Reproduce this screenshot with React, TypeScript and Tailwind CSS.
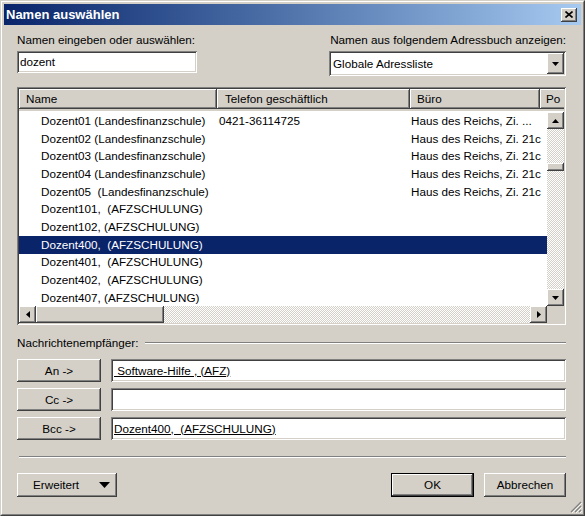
import React from "react";

const raised =
  "shadow-[inset_-1px_-1px_0_#404040,inset_1px_1px_0_#ffffff,inset_-2px_-2px_0_#808080,inset_2px_2px_0_#d4d0c8]";
const sunken =
  "shadow-[inset_1px_1px_0_#808080,inset_-1px_-1px_0_#ffffff,inset_2px_2px_0_#404040,inset_-2px_-2px_0_#d4d0c8]";
const dither =
  "bg-[image:repeating-conic-gradient(#d4d0c8_0_25%,#ffffff_0_50%)] bg-[length:2px_2px]";

type Dir = "up" | "down" | "left" | "right";

const Arrow = ({ dir }: { dir: Dir }) => {
  if (dir === "up")
    return (
      <svg width="7" height="4" viewBox="0 0 7 4">
        <polygon points="0,4 7,4 3.5,0" fill="#000" />
      </svg>
    );
  if (dir === "down")
    return (
      <svg width="7" height="4" viewBox="0 0 7 4">
        <polygon points="0,0 7,0 3.5,4" fill="#000" />
      </svg>
    );
  if (dir === "left")
    return (
      <svg width="4" height="7" viewBox="0 0 4 7">
        <polygon points="4,0 4,7 0,3.5" fill="#000" />
      </svg>
    );
  return (
    <svg width="4" height="7" viewBox="0 0 4 7">
      <polygon points="0,0 0,7 4,3.5" fill="#000" />
    </svg>
  );
};

const ScrollBtn = ({ dir }: { dir: Dir }) => (
  <div
    className={`w-[17px] h-[17px] shrink-0 bg-[#d4d0c8] ${raised} flex items-center justify-center`}
  >
    <Arrow dir={dir} />
  </div>
);

const rows = [
  ["Dozent01 (Landesfinanzschule)", "0421-36114725", "Haus des Reichs, Zi. ..."],
  ["Dozent02 (Landesfinanzschule)", "", "Haus des Reichs, Zi. 21c"],
  ["Dozent03 (Landesfinanzschule)", "", "Haus des Reichs, Zi. 21c"],
  ["Dozent04 (Landesfinanzschule)", "", "Haus des Reichs, Zi. 21c"],
  ["Dozent05  (Landesfinanzschule)", "", "Haus des Reichs, Zi. 21c"],
  ["Dozent101,  (AFZSCHULUNG)", "", ""],
  ["Dozent102, (AFZSCHULUNG)", "", ""],
  ["Dozent400,  (AFZSCHULUNG)", "", ""],
  ["Dozent401,  (AFZSCHULUNG)", "", ""],
  ["Dozent402,  (AFZSCHULUNG)", "", ""],
  ["Dozent407, (AFZSCHULUNG)", "", ""],
];

const selected = 7;

const RecipientRow = ({ label, value }: { label: string; value: string }) => (
  <div className="flex h-[23px] gap-[10px]">
    <div
      className={`w-[84px] h-full bg-[#d4d0c8] ${raised} flex items-center justify-center`}
    >
      {label}
    </div>
    <div className={`flex-1 h-full bg-white ${sunken} flex items-center pl-[3px]`}>
      <span className="underline whitespace-pre">{value}</span>
    </div>
  </div>
);

const App = () => {
  return (
    <div className="w-[585px] h-[516px] bg-[#d4d0c8] border border-t-[#d4d0c8] border-l-[#d4d0c8] border-r-[#404040] border-b-[#404040] font-['Liberation_Sans',Arial,sans-serif] text-[11.7px] leading-[14px] text-black select-none">
      <div className="relative h-full border border-t-white border-l-white border-r-[#808080] border-b-[#808080] p-[2px] flex flex-col">
        {/* title bar */}
        <div className="h-[21px] shrink-0 flex items-center bg-linear-to-r from-[#0a246a] to-[#a6caf0] pl-[2px] pr-[4px]">
          <span className="flex-1 text-white font-bold text-[13px]">Namen auswählen</span>
          <div
            className={`w-[16px] h-[14px] bg-[#d4d0c8] ${raised} flex items-center justify-center`}
          >
            <svg width="8" height="7" viewBox="0 0 8 7">
              <path d="M0.5 0.5 L7.5 6.5 M7.5 0.5 L0.5 6.5" stroke="#000" strokeWidth="1.6" />
            </svg>
          </div>
        </div>

        <div className="flex-1 flex flex-col pl-[13px] pr-[15px]">
          <div className="mt-[8px] flex justify-between h-[14px]">
            <span>Namen eingeben oder auswählen:</span>
            <span>Namen aus folgendem Adressbuch anzeigen:</span>
          </div>

          <div className="mt-[4px] flex justify-between items-start h-[25px]">
            <div className={`w-[180px] h-[22px] bg-white ${sunken} flex items-center pl-[3px]`}>
              dozent
            </div>
            <div className={`w-[237px] h-[25px] bg-white ${sunken} flex items-center p-[2px]`}>
              <span className="flex-1 pl-[2px]">Globale Adressliste</span>
              <div
                className={`w-[17px] h-full bg-[#d4d0c8] ${raised} flex items-center justify-center`}
              >
                <Arrow dir="down" />
              </div>
            </div>
          </div>

          {/* list view */}
          <div className={`mt-[11px] h-[238px] bg-[#d4d0c8] ${sunken} p-[2px] flex flex-col`}>
            <div className="h-[22px] shrink-0 flex overflow-hidden">
              <div className={`w-[198px] h-[20px] shrink-0 ${raised} flex items-center pl-[7px]`}>
                Name
              </div>
              <div className={`w-[193px] h-[20px] shrink-0 ${raised} flex items-center pl-[8px]`}>
                Telefon geschäftlich
              </div>
              <div className={`w-[130px] h-[20px] shrink-0 ${raised} flex items-center pl-[7px]`}>
                Büro
              </div>
              <div className={`w-[30px] h-[20px] shrink-0 ${raised} flex items-center pl-[6px]`}>
                Po
              </div>
            </div>
            <div className="flex-1 flex min-h-0 bg-white">
              <div className="flex-1 overflow-hidden pt-[1px]">
                {rows.map((r, i) => (
                  <div
                    key={i}
                    className={`h-[17.7px] flex items-center whitespace-pre ${
                      i === selected ? "bg-[#0a246a] text-white" : ""
                    }`}
                  >
                    <span className="w-[198px] shrink-0 pl-[22px]">{r[0]}</span>
                    <span className="w-[193px] shrink-0 pl-[2px]">{r[1]}</span>
                    <span className="w-[134px] shrink-0 pl-[1px] overflow-hidden">{r[2]}</span>
                  </div>
                ))}
              </div>
              <div className="w-[17px] flex flex-col pt-[1px]">
                <ScrollBtn dir="up" />
                <div className={`h-[34px] ${dither}`} />
                <div className={`h-[8px] bg-[#d4d0c8] ${raised}`} />
                <div className={`flex-1 ${dither}`} />
                <ScrollBtn dir="down" />
              </div>
            </div>
            <div className="h-[17px] shrink-0 flex">
              <ScrollBtn dir="left" />
              <div className={`w-[128px] h-full bg-[#d4d0c8] ${raised}`} />
              <div className={`flex-1 ${dither}`} />
              <ScrollBtn dir="right" />
              <div className="w-[17px] bg-[#d4d0c8]" />
            </div>
          </div>

          <div className="mt-[11px] h-[14px] flex items-center gap-[6px]">
            <span>Nachrichtenempfänger:</span>
            <div className="flex-1 h-[2px] border-t border-t-[#808080] border-b border-b-white" />
          </div>

          <div className="mt-[9px] flex flex-col gap-[6px]">
            <RecipientRow label="An ->" value=" Software-Hilfe , (AFZ)" />
            <RecipientRow label="Cc ->" value="" />
            <RecipientRow label="Bcc ->" value="Dozent400,  (AFZSCHULUNG)" />
          </div>

          <div className="mt-[16px] ml-[2px] h-[2px] border-t border-t-[#808080] border-b border-b-white" />

          <div className="mt-[15px] flex justify-between h-[24px]">
            <div
              className={`w-[100px] h-full bg-[#d4d0c8] ${raised} flex items-center justify-between pl-[16px] pr-[7px]`}
            >
              <span>Erweitert</span>
              <svg width="11" height="6" viewBox="0 0 11 6">
                <polygon points="0,0 11,0 5.5,6" fill="#000" />
              </svg>
            </div>
            <div className="flex gap-[10px] h-full">
              <div className="w-[83px] h-full border border-black">
                <div className={`w-full h-full bg-[#d4d0c8] ${raised} flex items-center justify-center`}>
                  OK
                </div>
              </div>
              <div
                className={`w-[82px] h-full bg-[#d4d0c8] ${raised} flex items-center justify-center`}
              >
                Abbrechen
              </div>
            </div>
          </div>
        </div>

        {/* size grip */}
        <svg
          className="absolute right-[1px] bottom-[1px]"
          width="12"
          height="12"
          viewBox="0 0 12 12"
        >
          <path d="M11 1 L1 11 M11 5 L5 11 M11 9 L9 11" stroke="#808080" strokeWidth="1.2" />
          <path d="M12 2 L2 12 M12 6 L6 12 M12 10 L10 12" stroke="#ffffff" strokeWidth="0.8" />
        </svg>
      </div>
    </div>
  );
};

export default App;
